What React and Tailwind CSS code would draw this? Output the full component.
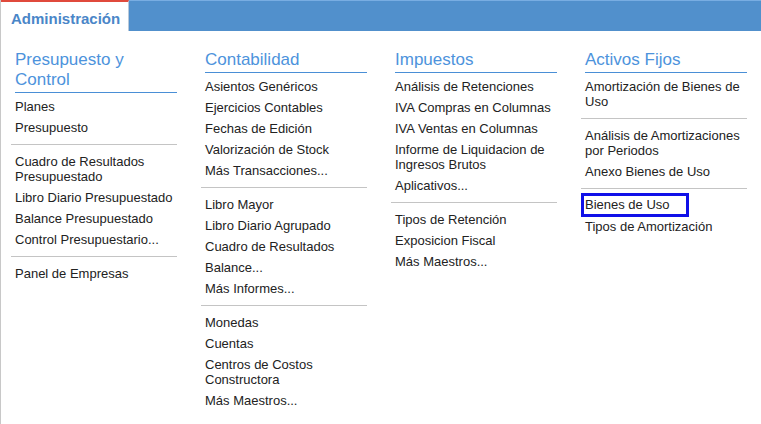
const columns = [
  {
    title: 'Presupuesto y Control',
    groups: [
      ['Planes', 'Presupuesto'],
      ['Cuadro de Resultados Presupuestado', 'Libro Diario Presupuestado', 'Balance Presupuestado', 'Control Presupuestario...'],
      ['Panel de Empresas'],
    ],
  },
  {
    title: 'Contabilidad',
    groups: [
      ['Asientos Genéricos', 'Ejercicios Contables', 'Fechas de Edición', 'Valorización de Stock', 'Más Transacciones...'],
      ['Libro Mayor', 'Libro Diario Agrupado', 'Cuadro de Resultados', 'Balance...', 'Más Informes...'],
      ['Monedas', 'Cuentas', 'Centros de Costos Constructora', 'Más Maestros...'],
    ],
  },
  {
    title: 'Impuestos',
    groups: [
      ['Análisis de Retenciones', 'IVA Compras en Columnas', 'IVA Ventas en Columnas', 'Informe de Liquidacion de Ingresos Brutos', 'Aplicativos...'],
      ['Tipos de Retención', 'Exposicion Fiscal', 'Más Maestros...'],
    ],
  },
  {
    title: 'Activos Fijos',
    groups: [
      ['Amortización de Bienes de Uso'],
      ['Análisis de Amortizaciones por Periodos', 'Anexo Bienes de Uso'],
      ['Bienes de Uso', 'Tipos de Amortización'],
    ],
  },
];

const ACTIVE = 'Bienes de Uso';

function MenuItem({ label }) {
  if (label === ACTIVE) {
    return (
      <div className="w-[108px] h-[24px] mt-[-2px] mb-[-1px] border-[3px] border-[#1010e8] pl-[1px] pt-[1px] leading-[15px] cursor-pointer">
        {label}
      </div>
    );
  }
  return <div className="pl-1 py-[3px] leading-[15px] cursor-pointer">{label}</div>;
}

function Column({ col }) {
  return (
    <div className="w-[166px]">
      <div className="ml-1 pb-[2px] border-b border-[#4a8fd6] text-[17px] leading-[20px] text-[#4d93dc]">
        {col.title}
      </div>
      <div className="mt-[3px]">
        {col.groups.map((group, i) => (
          <div key={i}>
            {i > 0 && <div className="my-[6px] h-px bg-[#c4c4c4]" />}
            {group.map((item) => (
              <MenuItem key={item} label={item} />
            ))}
          </div>
        ))}
      </div>
    </div>
  );
}

export default function App() {
  return (
    <div className="min-h-[424px] bg-white border-l border-[#c8c8c8] font-['Liberation_Sans',Arial,sans-serif] text-[13px] text-[#222]">
      <div className="flex h-[31px] bg-[#5190cc] border-t border-[#78ade2]">
        <div className="w-[128px] -mt-px bg-white border-t-2 border-[#e04a3c] border-r border-r-[#b9c9da] pl-[10px] pt-[6px] text-[15px] font-bold text-[#4a86c8]">
          Administración
        </div>
      </div>
      <div className="flex gap-[24px] pl-[10px] pt-[19px]">
        {columns.map((col) => (
          <Column key={col.title} col={col} />
        ))}
      </div>
    </div>
  );
}
